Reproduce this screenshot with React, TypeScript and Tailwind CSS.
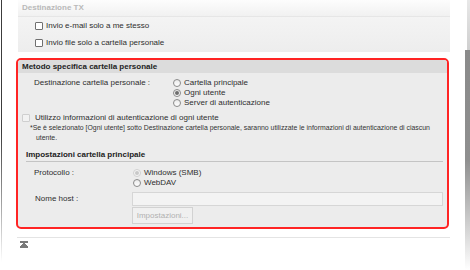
import React from "react";

function Checkbox({ disabled }: { disabled?: boolean }) {
  return (
    <span
      className={
        "inline-block w-[8px] h-[8px] rounded-[1px] border shrink-0 " +
        (disabled ? "border-[#cfcfcf] bg-[#f2f2f2]" : "border-[#707070] bg-white")
      }
    />
  );
}

function Radio({ checked, disabled }: { checked?: boolean; disabled?: boolean }) {
  return (
    <span
      className={
        "inline-flex items-center justify-center w-[8px] h-[8px] rounded-full border shrink-0 " +
        (disabled ? "border-[#d0d0d0] bg-[#f4f4f4]" : "border-[#8a8a8a] bg-gradient-to-b from-[#eaeaea] to-white")
      }
    >
      {checked && (
        <span className={"w-[4px] h-[4px] rounded-full " + (disabled ? "bg-[#c8c8c8]" : "bg-[#6e6e6e]")} />
      )}
    </span>
  );
}

export default function App() {
  return (
    <div className="w-[470px] h-[270px] bg-white flex font-['Liberation_Sans',Arial,sans-serif] text-[8px] leading-none text-[#2e2e2e] overflow-hidden">
      <div className="ml-[1px] w-[1px] h-[262px] bg-gradient-to-b from-[#3c3c3c] via-[#3c3c3c] to-white" />
      <div className="ml-[14px] w-[434px] flex flex-col">
        {/* Destinazione TX */}
        <div className="ml-[2px] w-[432px] h-[52px] flex flex-col bg-gradient-to-b from-[#f7f7f7] to-[#ededed]">
          <div className="h-[17px] flex items-center pl-[4px] font-bold text-[#b9b9b9] bg-gradient-to-b from-[#fdfdfd] to-[#f1f1f1] border-b border-[#e6e6e6]">
            Destinazione TX
          </div>
          <div className="h-[17px] flex items-center pl-[17px] gap-[3px]">
            <Checkbox />
            <span>Invio e-mail solo a me stesso</span>
          </div>
          <div className="h-[17px] flex items-center pl-[17px] gap-[3px]">
            <Checkbox />
            <span>Invio file solo a cartella personale</span>
          </div>
        </div>

        {/* Red box */}
        <div className="mt-[6px] w-[433px] border-2 border-[#ff2424] rounded-[5px] bg-[#ececec] flex flex-col pb-[3px] overflow-hidden">
          <div className="h-[13px] flex items-center pl-[4px] bg-[#dcdcdc] font-bold text-[#222]">
            Metodo specifica cartella personale
          </div>
          <div className="mt-[5px] flex pl-[16px]">
            <div className="w-[139px] h-[10px] flex items-center">Destinazione cartella personale :</div>
            <div className="flex flex-col">
              <div className="h-[10px] flex items-center gap-[3px]">
                <Radio />
                <span>Cartella principale</span>
              </div>
              <div className="h-[10px] flex items-center gap-[3px]">
                <Radio checked />
                <span>Ogni utente</span>
              </div>
              <div className="h-[10px] flex items-center gap-[3px]">
                <Radio />
                <span>Server di autenticazione</span>
              </div>
            </div>
          </div>
          <div className="mt-[5px] h-[10px] flex items-center pl-[4px] gap-[5px]">
            <Checkbox disabled />
            <span>Utilizzo informazioni di autenticazione di ogni utente</span>
          </div>
          <div className="pl-[12px] text-[6.9px] leading-[10px] text-[#333] whitespace-nowrap">
            <div>
              *Se è selezionato [Ogni utente] sotto Destinazione cartella personale, saranno utilizzate le informazioni di autenticazione di ciascun
            </div>
            <div className="pl-[6px]">utente.</div>
          </div>
          <div className="mt-[6px] ml-[8px] w-[417px] h-[13px] flex items-center font-bold text-[#222] border-b border-[#c4c4c4]">
            Impostazioni cartella principale
          </div>
          <div className="mt-[6px] flex pl-[16px]">
            <div className="w-[99px] h-[10px] flex items-center">Protocollo :</div>
            <div className="flex flex-col">
              <div className="h-[10px] flex items-center gap-[3px]">
                <Radio checked disabled />
                <span>Windows (SMB)</span>
              </div>
              <div className="h-[10px] flex items-center gap-[3px]">
                <Radio />
                <span>WebDAV</span>
              </div>
            </div>
          </div>
          <div className="mt-[4px] flex pl-[17px]">
            <div className="w-[97px] h-[14px] flex items-center">Nome host :</div>
            <div className="w-[311px] h-[14px] bg-[#f3f3f3] border border-[#d6d6d6]" />
          </div>
          <div className="mt-[1px] pl-[114px]">
            <div className="w-[61px] h-[17px] border border-[#d2d2d2] bg-[#f0f0f0] flex items-center justify-center text-[#b0b0b0]">
              Impostazioni...
            </div>
          </div>
        </div>

        <div className="mt-[8px] ml-[1px] w-[433px] h-[1px] bg-[#e4e4e4]" />
        <div className="mt-[3px] ml-[4px] flex flex-col items-center w-[8px]">
          <div className="w-[8px] h-[2px] bg-[#7a7a7a]" />
          <svg width="8" height="5" viewBox="0 0 8 5">
            <path d="M3 0h2v1h1v1h1v1h1v2H0V3h1V2h1V1h1z" fill="#7a7a7a" />
          </svg>
        </div>
      </div>
      <div className="ml-[15px] w-[5px] h-[270px] flex flex-col">
        <div className="h-[50px] ml-[2px] w-[3px] bg-gradient-to-b from-[#e8e8e8] to-[#cfcfcf]" />
        <div className="flex-1 bg-gradient-to-b from-[#8a8a8a] via-[#8f8f8f] to-white" />
      </div>
    </div>
  );
}
